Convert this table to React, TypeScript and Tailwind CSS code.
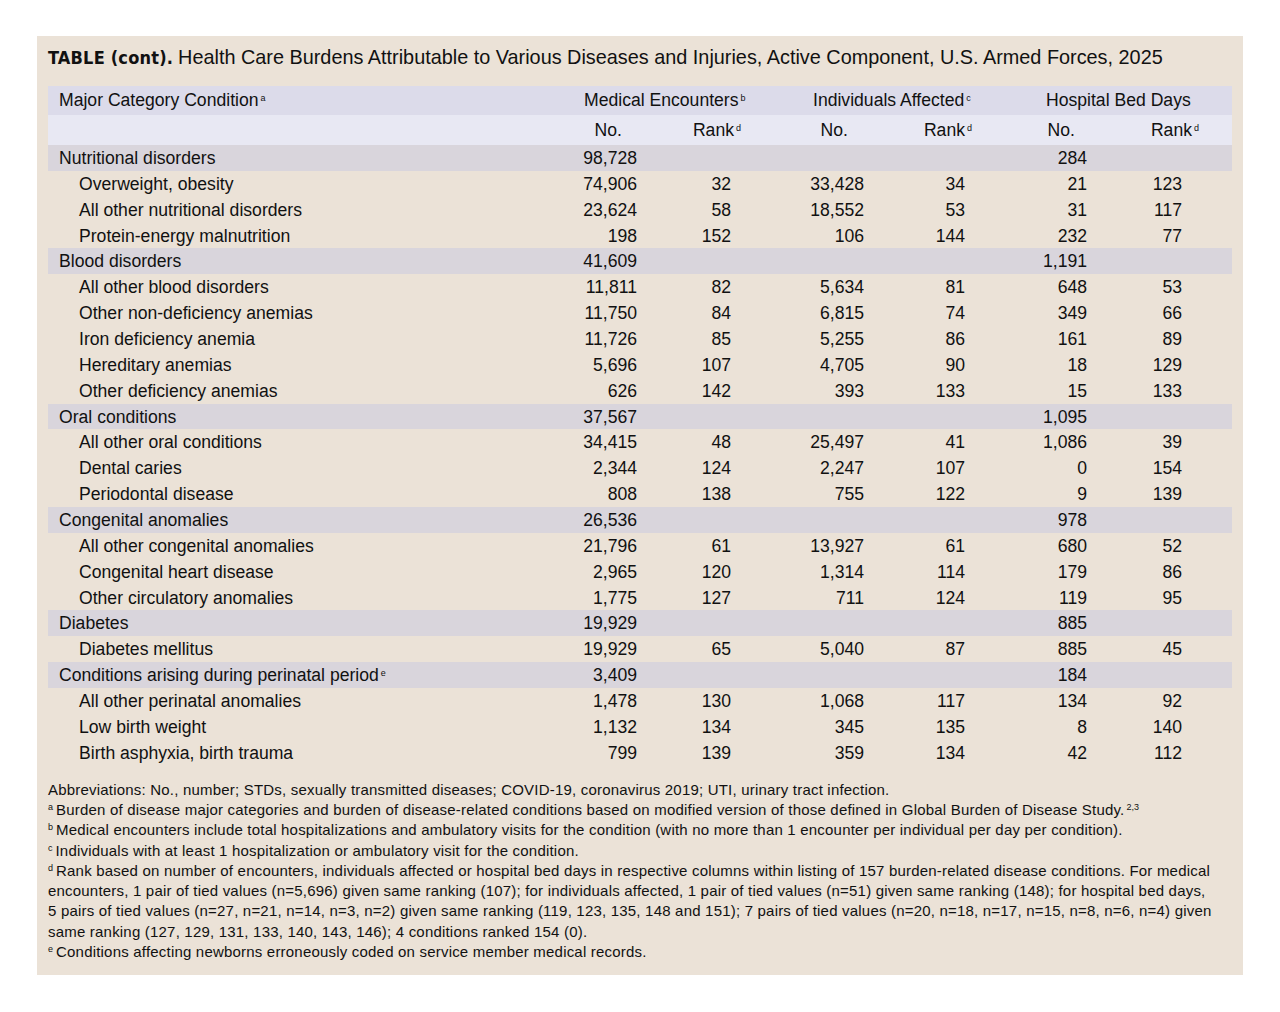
import React from "react";

type Row = { label: string; cat?: boolean; sup?: string; v: string[] };

const rows: Row[] = [
  { label: "Nutritional disorders", cat: true, v: ["98,728", "", "", "", "284", ""] },
  { label: "Overweight, obesity", v: ["74,906", "32", "33,428", "34", "21", "123"] },
  { label: "All other nutritional disorders", v: ["23,624", "58", "18,552", "53", "31", "117"] },
  { label: "Protein-energy malnutrition", v: ["198", "152", "106", "144", "232", "77"] },
  { label: "Blood disorders", cat: true, v: ["41,609", "", "", "", "1,191", ""] },
  { label: "All other blood disorders", v: ["11,811", "82", "5,634", "81", "648", "53"] },
  { label: "Other non-deficiency anemias", v: ["11,750", "84", "6,815", "74", "349", "66"] },
  { label: "Iron deficiency anemia", v: ["11,726", "85", "5,255", "86", "161", "89"] },
  { label: "Hereditary anemias", v: ["5,696", "107", "4,705", "90", "18", "129"] },
  { label: "Other deficiency anemias", v: ["626", "142", "393", "133", "15", "133"] },
  { label: "Oral conditions", cat: true, v: ["37,567", "", "", "", "1,095", ""] },
  { label: "All other oral conditions", v: ["34,415", "48", "25,497", "41", "1,086", "39"] },
  { label: "Dental caries", v: ["2,344", "124", "2,247", "107", "0", "154"] },
  { label: "Periodontal disease", v: ["808", "138", "755", "122", "9", "139"] },
  { label: "Congenital anomalies", cat: true, v: ["26,536", "", "", "", "978", ""] },
  { label: "All other congenital anomalies", v: ["21,796", "61", "13,927", "61", "680", "52"] },
  { label: "Congenital heart disease", v: ["2,965", "120", "1,314", "114", "179", "86"] },
  { label: "Other circulatory anomalies", v: ["1,775", "127", "711", "124", "119", "95"] },
  { label: "Diabetes", cat: true, v: ["19,929", "", "", "", "885", ""] },
  { label: "Diabetes mellitus", v: ["19,929", "65", "5,040", "87", "885", "45"] },
  { label: "Conditions arising during perinatal period", cat: true, sup: "e", v: ["3,409", "", "", "", "184", ""] },
  { label: "All other perinatal anomalies", v: ["1,478", "130", "1,068", "117", "134", "92"] },
  { label: "Low birth weight", v: ["1,132", "134", "345", "135", "8", "140"] },
  { label: "Birth asphyxia, birth trauma", v: ["799", "139", "359", "134", "42", "112"] },
];

const Sup = ({ c }: { c: string }) => (
  <span className="relative -top-[5px] ml-[2px] text-[9px] leading-none tracking-normal">{c}</span>
);

const FSup = ({ c }: { c: string }) => (
  <span className="inline-block align-top mt-[2px] mr-[3px] text-[9px] leading-[10px] tracking-normal">{c}</span>
);

const numPad = ["pr-[13px]", "pr-[29px]", "pr-[16px]", "pr-[25px]", "pr-[23px]", "pr-[50px]"];

export default function App() {
  return (
    <div
      className="min-h-[1012px] w-[1280px] bg-white pt-[36px] pl-[37px] text-[#111]"
      style={{ fontFamily: '"Liberation Sans", Arial, sans-serif' }}
    >
      <div className="w-[1206px] h-[939px] bg-[#ebe2d7] pt-[11px] px-[11px]">
        <div className="h-[22px] flex items-center text-[19.85px] leading-none whitespace-nowrap">
          <span
            className="font-bold text-[18px] tracking-[0.2px] mr-[5px]"
            style={{ fontFamily: '"DejaVu Sans Condensed", "DejaVu Sans", sans-serif', fontStretch: "condensed" }}
          >
            TABLE (cont).
          </span>
          <span>Health Care Burdens Attributable to Various Diseases and Injuries, Active Component, U.S. Armed Forces, 2025</span>
        </div>

        <div className="mt-[17px] w-[1184px] text-[17.6px]">
          <div className="grid grid-cols-[536px_190px_230px_228px] h-[29px] items-center bg-[#dcdbea]">
            <div className="pl-[11px]">
              Major Category Condition<Sup c="a" />
            </div>
            <div>
              Medical Encounters<Sup c="b" />
            </div>
            <div className="pl-[39px]">
              Individuals Affected<Sup c="c" />
            </div>
            <div className="pl-[42px]">Hospital Bed Days</div>
          </div>
          <div className="grid grid-cols-[512px_90px_110px_120px_110px_120px_122px] h-[30px] items-center bg-[#e8e8f3]">
            <div></div>
            <div className="text-right pr-[28px]">No.</div>
            <div className="text-right pr-[19px]">
              Rank<Sup c="d" />
            </div>
            <div className="text-right pr-[32px]">No.</div>
            <div className="text-right pr-[18px]">
              Rank<Sup c="d" />
            </div>
            <div className="text-right pr-[35px]">No.</div>
            <div className="text-right pr-[33px]">
              Rank<Sup c="d" />
            </div>
          </div>
          {rows.map((r, i) => (
            <div
              key={i}
              className={
                "grid grid-cols-[512px_90px_110px_120px_110px_120px_122px] h-[25.87px] items-center " +
                (r.cat ? "bg-[#d9d5dc]" : "")
              }
            >
              <div className={"whitespace-nowrap " + (r.cat ? "pl-[11px]" : "pl-[31px]")}>
                {r.label}
                {r.sup ? <Sup c={r.sup} /> : null}
              </div>
              {r.v.map((x, j) => (
                <div key={j} className={"text-right " + numPad[j]}>
                  {x}
                </div>
              ))}
            </div>
          ))}
        </div>

        <div className="mt-[14px] text-[15px] tracking-[0.2px] leading-[20.3px] pr-[17px]">
          <p>Abbreviations: No., number; STDs, sexually transmitted diseases; COVID-19, coronavirus 2019; UTI, urinary tract infection.</p>
          <p>
            <FSup c="a" />
            Burden of disease major categories and burden of disease-related conditions based on modified version of those defined in Global Burden of Disease Study.
            <Sup c="2,3" />
          </p>
          <p>
            <FSup c="b" />
            Medical encounters include total hospitalizations and ambulatory visits for the condition (with no more than 1 encounter per individual per day per condition).
          </p>
          <p>
            <FSup c="c" />
            Individuals with at least 1 hospitalization or ambulatory visit for the condition.
          </p>
          <p>
            <FSup c="d" />
            Rank based on number of encounters, individuals affected or hospital bed days in respective columns within listing of 157 burden-related disease conditions. For medical encounters, 1 pair of tied values (n=5,696) given same ranking (107); for individuals affected, 1 pair of tied values (n=51) given same ranking (148); for hospital bed days, 5 pairs of tied values (n=27, n=21, n=14, n=3, n=2) given same ranking (119, 123, 135, 148 and 151); 7 pairs of tied values (n=20, n=18, n=17, n=15, n=8, n=6, n=4) given same ranking (127, 129, 131, 133, 140, 143, 146); 4 conditions ranked 154 (0).
          </p>
          <p>
            <FSup c="e" />
            Conditions affecting newborns erroneously coded on service member medical records.
          </p>
        </div>
      </div>
    </div>
  );
}
